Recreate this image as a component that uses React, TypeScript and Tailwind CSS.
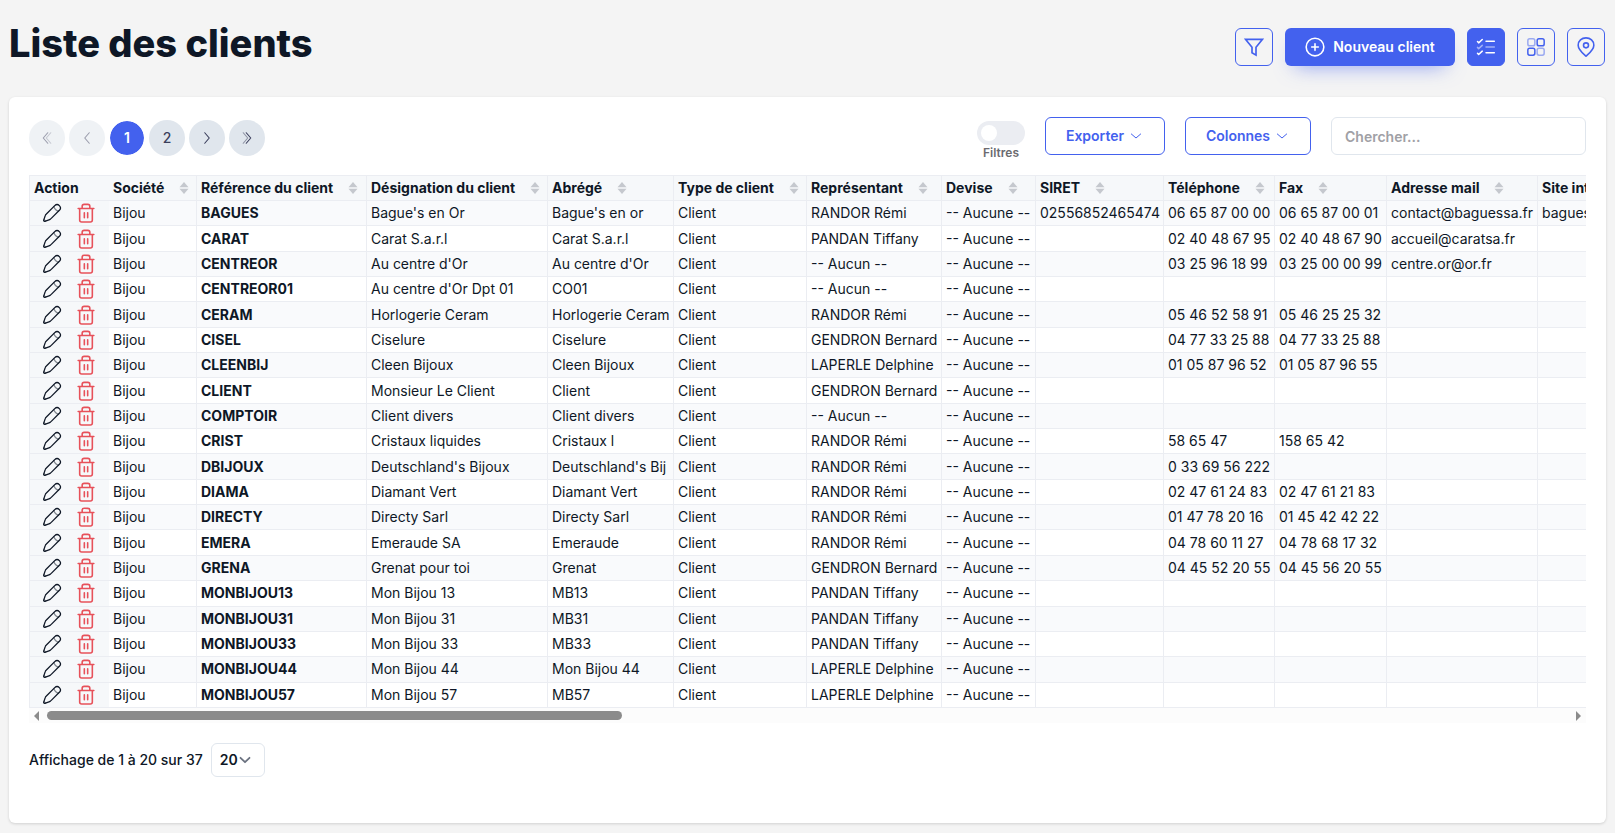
import React from "react";

type Client = {
  ref: string;
  name: string;
  short: string;
  rep: string;
  siret?: string;
  phone?: string;
  fax?: string;
  mail?: string;
  site?: string;
};

const columns = [
  { label: "Société", width: "w-[88px]" },
  { label: "Référence du client", width: "w-[170px]" },
  { label: "Désignation du client", width: "w-[181px]" },
  { label: "Abrégé", width: "w-[126px]" },
  { label: "Type de client", width: "w-[133px]" },
  { label: "Représentant", width: "w-[135px]" },
  { label: "Devise", width: "w-[94px]" },
  { label: "SIRET", width: "w-[128px]" },
  { label: "Téléphone", width: "w-[111px]" },
  { label: "Fax", width: "w-[112px]" },
  { label: "Adresse mail", width: "w-[151px]" },
  { label: "Site internet", width: "w-[151px]" },
];

const clients: Client[] = [
  { ref: "BAGUES", name: "Bague's en Or", short: "Bague's en or", rep: "RANDOR Rémi", siret: "02556852465474", phone: "06 65 87 00 00", fax: "06 65 87 00 01", mail: "contact@baguessa.fr", site: "baguessa.fr" },
  { ref: "CARAT", name: "Carat S.a.r.l", short: "Carat S.a.r.l", rep: "PANDAN Tiffany", phone: "02 40 48 67 95", fax: "02 40 48 67 90", mail: "accueil@caratsa.fr" },
  { ref: "CENTREOR", name: "Au centre d'Or", short: "Au centre d'Or", rep: "-- Aucun --", phone: "03 25 96 18 99", fax: "03 25 00 00 99", mail: "centre.or@or.fr" },
  { ref: "CENTREOR01", name: "Au centre d'Or Dpt 01", short: "CO01", rep: "-- Aucun --" },
  { ref: "CERAM", name: "Horlogerie Ceram", short: "Horlogerie Ceram", rep: "RANDOR Rémi", phone: "05 46 52 58 91", fax: "05 46 25 25 32" },
  { ref: "CISEL", name: "Ciselure", short: "Ciselure", rep: "GENDRON Bernard", phone: "04 77 33 25 88", fax: "04 77 33 25 88" },
  { ref: "CLEENBIJ", name: "Cleen Bijoux", short: "Cleen Bijoux", rep: "LAPERLE Delphine", phone: "01 05 87 96 52", fax: "01 05 87 96 55" },
  { ref: "CLIENT", name: "Monsieur Le Client", short: "Client", rep: "GENDRON Bernard" },
  { ref: "COMPTOIR", name: "Client divers", short: "Client divers", rep: "-- Aucun --" },
  { ref: "CRIST", name: "Cristaux liquides", short: "Cristaux l", rep: "RANDOR Rémi", phone: "58 65 47", fax: "158 65 42" },
  { ref: "DBIJOUX", name: "Deutschland's Bijoux", short: "Deutschland's Bij", rep: "RANDOR Rémi", phone: "0 33 69 56 222" },
  { ref: "DIAMA", name: "Diamant Vert", short: "Diamant Vert", rep: "RANDOR Rémi", phone: "02 47 61 24 83", fax: "02 47 61 21 83" },
  { ref: "DIRECTY", name: "Directy Sarl", short: "Directy Sarl", rep: "RANDOR Rémi", phone: "01 47 78 20 16", fax: "01 45 42 42 22" },
  { ref: "EMERA", name: "Emeraude SA", short: "Emeraude", rep: "RANDOR Rémi", phone: "04 78 60 11 27", fax: "04 78 68 17 32" },
  { ref: "GRENA", name: "Grenat pour toi", short: "Grenat", rep: "GENDRON Bernard", phone: "04 45 52 20 55", fax: "04 45 56 20 55" },
  { ref: "MONBIJOU13", name: "Mon Bijou 13", short: "MB13", rep: "PANDAN Tiffany" },
  { ref: "MONBIJOU31", name: "Mon Bijou 31", short: "MB31", rep: "PANDAN Tiffany" },
  { ref: "MONBIJOU33", name: "Mon Bijou 33", short: "MB33", rep: "PANDAN Tiffany" },
  { ref: "MONBIJOU44", name: "Mon Bijou 44", short: "Mon Bijou 44", rep: "LAPERLE Delphine" },
  { ref: "MONBIJOU57", name: "Mon Bijou 57", short: "MB57", rep: "LAPERLE Delphine" },
];

function Icon({ className, children }: { className: string; children: React.ReactNode }) {
  return (
    <svg
      viewBox="0 0 24 24"
      fill="none"
      stroke="currentColor"
      strokeWidth="1.5"
      strokeLinecap="round"
      strokeLinejoin="round"
      className={className}
      aria-hidden="true"
    >
      {children}
    </svg>
  );
}

const FilterIcon = () => (
  <Icon className="size-5">
    <path d="M1.8 2.8H22.2L14.4 12.4V21.8L9.6 19V12.4L1.8 2.8Z" strokeLinejoin="miter" strokeWidth="2" />
  </Icon>
);

const PlusIcon = () => (
  <Icon className="size-5">
    <g strokeWidth="1.9">
      <circle cx="12" cy="12" r="10.6" />
      <path d="M12 8V16M8 12H16" />
    </g>
  </Icon>
);

const ListIcon = () => (
  <Icon className="size-5">
    <g strokeWidth="1.8">
      <path d="M1.8 5.5L3.2 7L7.5 3" />
      <path opacity="0.5" d="M1.8 12.5L3.2 14L7.5 10" />
      <path d="M1.8 19.5L3.2 21L7.5 17" />
      <path d="M22 19H12" />
      <path opacity="0.5" d="M22 12H12" />
      <path d="M22 5H12" />
    </g>
  </Icon>
);

const GridIcon = () => (
  <Icon className="size-5">
    <g strokeWidth="1.8">
      <rect opacity="0.5" x="2.2" y="2.2" width="8.4" height="8.4" rx="2.2" />
      <rect x="13.4" y="2.2" width="8.4" height="8.4" rx="2.2" />
      <rect x="2.2" y="13.4" width="8.4" height="8.4" rx="2.2" />
      <rect opacity="0.5" x="13.4" y="13.4" width="8.4" height="8.4" rx="2.2" />
    </g>
  </Icon>
);

const PinIcon = () => (
  <Icon className="size-5">
    <g strokeWidth="1.9">
      <path d="M12 23C9.5 20.6 2.6 15.5 2.6 9.8C2.6 4.7 6.8 1 12 1C17.2 1 21.4 4.7 21.4 9.8C21.4 15.5 14.5 20.6 12 23Z" />
      <circle cx="12" cy="10" r="3" />
    </g>
  </Icon>
);

const PencilIcon = () => (
  <Icon className="size-5">
    <path d="M15.29 3.15L5.84 12.6C5.26 13.18 4.97 13.47 4.72 13.78C4.43 14.16 4.18 14.57 3.98 15C3.8 15.36 3.67 15.75 3.42 16.52L2.05 20.6C1.93 20.99 2.03 21.41 2.31 21.69C2.59 21.97 3.01 22.07 3.4 21.95L7.48 20.58C8.25 20.33 8.64 20.2 9 20.02C9.43 19.82 9.84 19.57 10.22 19.28C10.53 19.03 10.82 18.74 11.4 18.16L20.85 8.71C22.38 7.18 22.38 4.69 20.85 3.15C19.31 1.62 16.82 1.62 15.29 3.15Z" />
    <path opacity="0.5" d="M14.36 4.08C14.36 4.08 14.48 6.05 16.21 7.79C17.95 9.52 19.92 9.64 19.92 9.64M4.2 21.68L2.32 19.8" />
  </Icon>
);

const TrashIcon = () => (
  <Icon className="size-5">
    <g strokeWidth="1.9">
      <path d="M2.6 6.6H21.4" />
      <path d="M7.4 6.2V4C7.4 2.4 8.2 1.6 9.8 1.6H14.2C15.8 1.6 16.6 2.4 16.6 4V6.2" />
      <path d="M4.4 7V20.4C4.4 22 5.2 22.8 6.8 22.8H17.2C18.8 22.8 19.6 22 19.6 20.4V7" />
      <path d="M10 11.8V17.6M14 11.8V17.6" />
    </g>
  </Icon>
);

const ChevronDown = ({ className }: { className: string }) => (
  <Icon className={className}>
    <path d="M19 9L12 15L5 9" />
  </Icon>
);

const SortIcon = () => (
  <svg viewBox="0 0 10 12" className="h-3 w-[10px] fill-[#c5c8ce]" aria-hidden="true">
    <path d="M5 0L9.5 5.3H0.5Z" />
    <path d="M5 12L9.5 6.7H0.5Z" />
  </svg>
);

const iconButton = "flex size-[38px] items-center justify-center rounded-md border border-[#4361ee]";
const pageButton = "flex size-9 items-center justify-center rounded-full bg-[#e0e6ed] text-sm font-medium text-[#3b3f5c]";
const dropButton = "flex h-[38px] items-center justify-center gap-1 rounded-md border border-[#4361ee] text-sm font-semibold text-[#4361ee]";
const cell = "h-[25px] border-r border-b border-[#ebedf2] py-0 pl-1 text-left whitespace-nowrap";

export default function App() {
  return (
    <main className="min-h-screen bg-[#f4f4f4] px-[9px] pt-5 pb-[10px] font-['Inter',sans-serif] text-sm text-[#0e1726]">
      <header className="mb-[17px] flex h-[60px] items-start justify-between">
        <h1 className="text-[38px] leading-[46px] font-extrabold">Liste des clients</h1>
        <div className="flex gap-3 pt-2 pr-px">
          <button aria-label="Filtrer" className={`${iconButton} text-[#4361ee]`}>
            <FilterIcon />
          </button>
          <button className="flex h-[38px] w-[170px] items-center justify-center gap-2 rounded-md bg-[#4361ee] text-sm font-semibold text-white shadow-[0_10px_20px_-10px_rgba(67,97,238,0.6)]">
            <PlusIcon />
            Nouveau client
          </button>
          <button aria-label="Vue liste" className={`${iconButton} bg-[#4361ee] text-white`}>
            <ListIcon />
          </button>
          <button aria-label="Vue grille" className={`${iconButton} text-[#4361ee]`}>
            <GridIcon />
          </button>
          <button aria-label="Vue carte" className={`${iconButton} text-[#4361ee]`}>
            <PinIcon />
          </button>
        </div>
      </header>

      <section className="rounded-md bg-white px-5 pt-5 pb-[46px] shadow-[0_1px_3px_rgba(0,0,0,0.15)]">
        <div className="mb-5 flex h-[38px] items-start justify-between">
          <nav aria-label="Pagination" className="flex gap-1 pt-[3px]">
            <button aria-label="Première page" disabled className={`${pageButton} opacity-50`}>
              <Icon className="size-[18px]">
                <path d="M13 19L7 12L13 5" />
                <path opacity="0.5" d="M17 19L11 12L17 5" />
              </Icon>
            </button>
            <button aria-label="Page précédente" disabled className={`${pageButton} opacity-50`}>
              <Icon className="size-[18px]">
                <path d="M15 5L9 12L15 19" />
              </Icon>
            </button>
            <button className="flex size-9 items-center justify-center rounded-full border border-white bg-[#4361ee] bg-clip-padding text-sm font-semibold text-white">
              1
            </button>
            <button className={pageButton}>2</button>
            <button aria-label="Page suivante" className={pageButton}>
              <Icon className="size-[18px]">
                <path d="M9 5L15 12L9 19" />
              </Icon>
            </button>
            <button aria-label="Dernière page" className={pageButton}>
              <Icon className="size-[18px]">
                <path d="M11 19L17 12L11 5" />
                <path opacity="0.5" d="M7 19L13 12L7 5" />
              </Icon>
            </button>
          </nav>

          <div className="flex items-start gap-5">
            <label className="flex w-12 flex-col items-center pt-1 text-xs font-semibold text-[#6b6b70]">
              <input type="checkbox" className="peer sr-only" />
              <span className="flex h-6 w-12 items-center rounded-full bg-[#ebedf2] px-1 peer-checked:bg-[#4361ee]">
                <span className="size-4 rounded-full bg-white" />
              </span>
              Filtres
            </label>
            <button className={`${dropButton} w-[120px]`}>
              Exporter
              <ChevronDown className="size-4" />
            </button>
            <button className={`${dropButton} w-[126px]`}>
              Colonnes
              <ChevronDown className="size-4" />
            </button>
            <input
              type="text"
              aria-label="Chercher"
              placeholder="Chercher..."
              className="h-[38px] w-[255px] rounded-md border border-[#e0e6ed] px-[13px] text-sm font-semibold placeholder:text-[#a0a0a5]"
            />
          </div>
        </div>

        <div className="overflow-hidden">
          <table className="h-[533px] w-max table-fixed border-separate border-spacing-0 border-t border-l border-[#ebedf2] leading-5">
            <thead>
              <tr className="h-[25px] bg-[#f6f8fa]">
                <th className="h-[25px] w-[79px] border-b border-[#ebedf2] py-0 pl-1 text-left font-bold">Action</th>
                {columns.map((col) => (
                  <th key={col.label} className={`${cell} ${col.width} font-bold`}>
                    <span className="flex items-center gap-[15px]">
                      {col.label}
                      <SortIcon />
                    </span>
                  </th>
                ))}
              </tr>
            </thead>
            <tbody>
              {clients.map((client) => (
                <tr key={client.ref} className="h-[25px] odd:bg-[#f9fafc]">
                  <td className="h-[25px] border-b border-[#ebedf2] bg-[#f6f8fa] py-0 pl-3">
                    <div className="flex gap-[14px]">
                      <button aria-label={`Modifier ${client.ref}`}>
                        <PencilIcon />
                      </button>
                      <button aria-label={`Supprimer ${client.ref}`} className="text-[#e7515a]">
                        <TrashIcon />
                      </button>
                    </div>
                  </td>
                  <td className={cell}>Bijou</td>
                  <td className={`${cell} font-bold`}>{client.ref}</td>
                  <td className={cell}>{client.name}</td>
                  <td className={cell}>{client.short}</td>
                  <td className={cell}>Client</td>
                  <td className={cell}>{client.rep}</td>
                  <td className={cell}>-- Aucune --</td>
                  <td className={cell}>{client.siret}</td>
                  <td className={cell}>{client.phone}</td>
                  <td className={cell}>{client.fax}</td>
                  <td className={cell}>{client.mail}</td>
                  <td className={cell}>{client.site}</td>
                </tr>
              ))}
            </tbody>
          </table>
        </div>

        <div className="mb-5 flex h-[15px] items-center gap-2 bg-[#fcfcfc] px-[5px]">
          <svg viewBox="0 0 5 10" className="h-[10px] w-[5px] fill-[#8b8b8b]" aria-hidden="true">
            <path d="M5 0V10L0 5Z" />
          </svg>
          <div className="flex-1">
            <div className="h-[9px] w-[37.8%] rounded-full bg-[#8b8b8b]" />
          </div>
          <svg viewBox="0 0 5 10" className="h-[10px] w-[5px] fill-[#8b8b8b]" aria-hidden="true">
            <path d="M0 0V10L5 5Z" />
          </svg>
        </div>

        <div className="flex items-center gap-2 font-medium">
          <label htmlFor="page-size">Affichage de 1 à 20 sur 37</label>
          <div className="relative">
            <select
              id="page-size"
              defaultValue="20"
              className="h-[34px] w-[54px] appearance-none rounded-md border border-[#e0e6ed] bg-white pl-2 text-sm font-semibold"
            >
              <option>10</option>
              <option>20</option>
              <option>50</option>
            </select>
            <svg
              viewBox="0 0 12 12"
              fill="none"
              stroke="#6b7280"
              strokeWidth="1.8"
              strokeLinecap="round"
              strokeLinejoin="round"
              className="pointer-events-none absolute top-[11px] right-[14px] size-3"
              aria-hidden="true"
            >
              <path d="M1.5 3.8L6 8.2L10.5 3.8" />
            </svg>
          </div>
        </div>
      </section>
    </main>
  );
}
